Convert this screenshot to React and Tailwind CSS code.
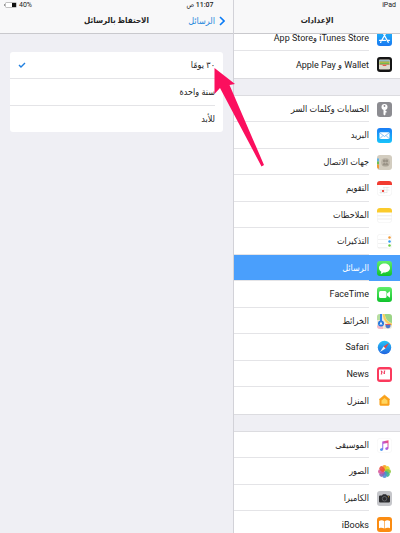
const AppIcon = ({ name }) => {
  switch (name) {
    case "appstore":
      return (
        <svg viewBox="0 0 30 30" className="size-[15px]">
          <defs>
            <linearGradient id="storeBlue" x1="0" y1="0" x2="0" y2="1">
              <stop offset="0" stopColor="#1fb6fb" />
              <stop offset="1" stopColor="#1a78f0" />
            </linearGradient>
          </defs>
          <rect width="30" height="30" rx="6" fill="url(#storeBlue)" />
          <g stroke="#fff" strokeWidth="2.6" strokeLinecap="round" fill="none">
            <path d="M16.500 6.500 L9.500 18.500 M13.500 6.500 L22.500 22.500 M5 18.700 H17 M21 18.700 H25 M8 21.500 L7.300 22.800" />
          </g>
        </svg>
      );
    case "wallet":
      return (
        <svg viewBox="0 0 30 30" className="size-[15px]">
          <rect width="30" height="30" rx="6" fill="#151515" />
          <rect x="4" y="5" width="22" height="20" rx="2" fill="#d9d5c8" />
          <rect x="5" y="7" width="20" height="3" fill="#57a3c8" />
          <rect x="5" y="9" width="20" height="3" fill="#e6b839" />
          <rect x="5" y="11" width="20" height="4" fill="#74b84f" />
          <rect x="5" y="15" width="20" height="3" fill="#e35b50" />
          <path d="M4 16 H10 C12 16 11 19 15 19 S18 16 20 16 H26 V24 H4 Z" fill="#dedacf" />
        </svg>
      );
    case "accounts":
      return (
        <svg viewBox="0 0 30 30" className="size-[15px]">
          <rect width="30" height="30" rx="6" fill="#8c8c91" />
          <circle cx="15" cy="10" r="6" fill="#fff" />
          <circle cx="15" cy="8" r="1.800" fill="#8c8c91" />
          <path d="M13 14 H17 V25 L15 27 L13 25 Z M17 18 h2 v3 h-2 Z" fill="#fff" />
        </svg>
      );
    case "mail":
      return (
        <svg viewBox="0 0 30 30" className="size-[15px]">
          <defs>
            <linearGradient id="mailBlue" x1="0" y1="0" x2="0" y2="1">
              <stop offset="0" stopColor="#1a7cf5" />
              <stop offset="1" stopColor="#18c4fb" />
            </linearGradient>
          </defs>
          <rect width="30" height="30" rx="6" fill="url(#mailBlue)" />
          <rect x="5" y="8.500" width="20" height="13.500" rx="2" fill="#fff" />
          <path d="M5.500 9.500 L15 17 L24.500 9.500 M5.500 21.500 L12 15 M24.500 21.500 L18 15" stroke="#3a9af0" strokeWidth="1.200" fill="none" />
        </svg>
      );
    case "contacts":
      return (
        <svg viewBox="0 0 30 30" className="size-[15px]">
          <rect width="30" height="30" rx="6" fill="#d3cdc0" />
          <path d="M0 7 H4 V13 H0 Z" fill="#5fb2e4" />
          <path d="M0 13 H4 V19 H0 Z" fill="#6bc152" />
          <path d="M0 19 H4 V28 L0 25 Z" fill="#f19a37" />
          <circle cx="17" cy="15" r="9" fill="#bdb6a9" />
          <circle cx="14.500" cy="12" r="2.800" fill="#9a9387" />
          <circle cx="19.500" cy="12" r="2.800" fill="#9a9387" />
          <path d="M11 21 C11 15 17 15 17 19 C17 15 23 15 23 21 Z" fill="#9a9387" />
        </svg>
      );
    case "calendar":
      return (
        <svg viewBox="0 0 30 30" className="size-[15px]">
          <rect x=".5" y=".5" width="29" height="29" rx="6" fill="#fff" stroke="#ececec" />
          <path d="M0 8 V6 A6 6 0 0 1 6 0 H24 A6 6 0 0 1 30 6 V8 Z" fill="#f23b30" />
          <path d="M12 13 H25 M5 18 H25 M5 23 H20 M8 17 V26 M14 12 V26 M20 12 V24" stroke="#d9d9d9" strokeWidth="1" />
          <rect x="10" y="18" width="4" height="4" fill="#ee4a41" />
        </svg>
      );
    case "notes":
      return (
        <svg viewBox="0 0 30 30" className="size-[15px]">
          <rect x=".5" y=".5" width="29" height="29" rx="6" fill="#fff" stroke="#ececec" />
          <path d="M0 9 V6 A6 6 0 0 1 6 0 H24 A6 6 0 0 1 30 6 V9 Z" fill="#fbcb2c" />
          <path d="M1 15.500 H29 M1 22 H29" stroke="#d8d8d8" strokeWidth="1" />
        </svg>
      );
    case "reminders":
      return (
        <svg viewBox="0 0 30 30" className="size-[15px]">
          <rect x=".5" y=".5" width="29" height="29" rx="6" fill="#fff" stroke="#ececec" />
          <path d="M2 11 H21 M2 19 H21 M2 27 H21" stroke="#e2e2e2" strokeWidth="1" />
          <circle cx="25" cy="7" r="2.500" fill="#f19a37" />
          <circle cx="25" cy="15" r="2.500" fill="#2f9bf2" />
          <circle cx="25" cy="23" r="2.500" fill="#6ccb3f" />
        </svg>
      );
    case "messages":
    case "facetime":
      return (
        <svg viewBox="0 0 30 30" className="size-[15px]">
          <defs>
            <linearGradient id={name + "Green"} x1="0" y1="0" x2="0" y2="1">
              <stop offset="0" stopColor="#62ee6a" />
              <stop offset="1" stopColor="#0fc22c" />
            </linearGradient>
          </defs>
          <rect width="30" height="30" rx="6" fill={"url(#" + name + "Green)"} />
          {name === "messages" ? (
            <path d="M15 5 C8.500 5 4 9 4 14 C4 17.300 6 20 8.700 21.600 C8.600 23.300 8 24.500 7 25.500 C9.500 25.300 11 24.300 12.300 22.800 C20 23.800 26 19.500 26 14 C26 9 21.500 5 15 5 Z" fill="#fff" />
          ) : (
            <>
              <rect x="4" y="8" width="15" height="14" rx="3" fill="#fff" />
              <path d="M20 13 L26 8.500 V21.500 L20 17 Z" fill="#fff" />
            </>
          )}
        </svg>
      );
    case "maps":
      return (
        <svg viewBox="0 0 30 30" className="size-[15px]">
          <defs>
            <clipPath id="mapTile">
              <rect width="30" height="30" rx="6" />
            </clipPath>
          </defs>
          <g clipPath="url(#mapTile)">
            <rect width="30" height="30" fill="#eee9db" />
            <path d="M15 0 H30 V18 C23 17 17 10 15 0 Z" fill="#9bd586" />
            <path d="M0 0 H6 V12 H0 Z" fill="#b7dfa0" />
            <path d="M0 23 H12 V30 H0 Z" fill="#f4b7c5" />
            <path d="M13 0 C15 13 21 19 30 21" stroke="#f7cf5c" strokeWidth="4" fill="none" />
            <path d="M8 0 V18" stroke="#3184ec" strokeWidth="4" />
            <circle cx="8" cy="19" r="6" fill="#2477df" />
            <path d="M8 15 L11 22 L8 20.500 L5 22 Z" fill="#fff" />
            <path d="M17 20 H27 V24 C27 27 24 28 22 29 C20 28 17 27 17 24 Z" fill="#4b78ca" />
            <path d="M17 20 H27 V22 H17 Z" fill="#e15364" />
          </g>
        </svg>
      );
    case "safari":
      return (
        <svg viewBox="0 0 30 30" className="size-[15px]">
          <defs>
            <linearGradient id="safariBlue" x1="0" y1="0" x2="0" y2="1">
              <stop offset="0" stopColor="#25c4f7" />
              <stop offset="1" stopColor="#2264e0" />
            </linearGradient>
          </defs>
          <circle cx="15" cy="15" r="13.500" fill="url(#safariBlue)" />
          <path d="M24 6 L17 17 L13 13 Z" fill="#f0443b" />
          <path d="M6 24 L17 17 L13 13 Z" fill="#f5f7fa" />
        </svg>
      );
    case "news":
      return (
        <svg viewBox="0 0 30 30" className="size-[15px]">
          <rect width="30" height="30" rx="6" fill="#fb3a5d" />
          <rect x="4" y="5" width="22" height="20" rx="1" fill="#fff" />
          <path d="M9 14 V8 L15 14 V8 M7.500 8 H9.500 M13.500 8 H16.500 M7.500 14 H10.500" stroke="#ef3256" strokeWidth="1.700" fill="none" />
        </svg>
      );
    case "home":
      return (
        <svg viewBox="0 0 30 30" className="size-[15px]">
          <path d="M15 4 L26 13 H24.500 V23 Q24.500 25 22.500 25 H7.500 Q5.500 25 5.500 23 V13 H4 Z" fill="#f9a11b" stroke="#f9a11b" strokeLinejoin="round" />
          <path d="M15 10 L21 15 V21.500 H9 V15 Z" fill="#ffd660" />
        </svg>
      );
    case "music":
      return (
        <svg viewBox="0 0 30 30" className="size-[15px]">
          <defs>
            <linearGradient id="noteTint" x1="1" y1="0" x2="0" y2="1">
              <stop offset="0" stopColor="#fb4767" />
              <stop offset=".5" stopColor="#b05be4" />
              <stop offset="1" stopColor="#36a8f5" />
            </linearGradient>
          </defs>
          <rect x=".5" y=".5" width="29" height="29" rx="6" fill="#fff" stroke="#f0f0f0" />
          <path d="M10.500 7 L23 4.500 V20 C23 25 16 25 16.500 21 C17 18.500 19 18.500 21 18 V10 L12.500 11.700 V22 C12.500 27 5.500 27 6 23 C6.500 20.500 8.500 20.500 10.500 20 Z" fill="url(#noteTint)" />
        </svg>
      );
    case "photos":
      return (
        <svg viewBox="0 0 30 30" className="size-[15px]">
          {[
            "#f7a022",
            "#e5d428",
            "#8cc63f",
            "#3fb38d",
            "#4d8fd6",
            "#8a65b8",
            "#d8599b",
            "#f0533c",
          ].map((color, i) => (
            <rect
              key={color}
              x="10.500"
              y="2"
              width="9"
              height="12.500"
              rx="4.500"
              fill={color}
              fillOpacity=".9"
              transform={`rotate(${i * 45} 15 15)`}
            />
          ))}
        </svg>
      );
    case "camera":
      return (
        <svg viewBox="0 0 30 30" className="size-[15px]">
          <rect width="30" height="30" rx="6" fill="#c5c6ca" />
          <path d="M4 11 Q4 9 6 9 H10 L12 6.500 H18 L20 9 H24 Q26 9 26 11 V21 Q26 23 24 23 H6 Q4 23 4 21 Z" fill="#2c2c2f" />
          <circle cx="15" cy="15.500" r="4.500" fill="#2c2c2f" stroke="#808186" strokeWidth="1.200" />
          <circle cx="23" cy="11.500" r="1" fill="#f3b72f" />
        </svg>
      );
    case "ibooks":
      return (
        <svg viewBox="0 0 30 30" className="size-[15px]">
          <rect width="30" height="30" rx="6" fill="#fb8c12" />
          <path d="M4 8 C8 6 12 6.500 14.400 8.500 V23 C11.500 21.300 8 21.300 4 22.500 Z M26 8 C22 6 18 6.500 15.600 8.500 V23 C18.500 21.300 22 21.300 26 22.500 Z" fill="#fff" />
        </svg>
      );
    default:
      return null;
  }
};

const groups = [
  [
    { icon: "appstore", label: "iTunes Store وApp Store" },
    { icon: "wallet", label: "Wallet و Apple Pay" },
  ],
  [
    { icon: "accounts", label: "الحسابات وكلمات السر" },
    { icon: "mail", label: "البريد" },
    { icon: "contacts", label: "جهات الاتصال" },
    { icon: "calendar", label: "التقويم" },
    { icon: "notes", label: "الملاحظات" },
    { icon: "reminders", label: "التذكيرات" },
    { icon: "messages", label: "الرسائل", active: true },
    { icon: "facetime", label: "FaceTime" },
    { icon: "maps", label: "الخرائط" },
    { icon: "safari", label: "Safari" },
    { icon: "news", label: "News" },
    { icon: "home", label: "المنزل" },
  ],
  [
    { icon: "music", label: "الموسيقى" },
    { icon: "photos", label: "الصور" },
    { icon: "camera", label: "الكاميرا" },
    { icon: "ibooks", label: "iBooks" },
  ],
];

const durations = ["٣٠ يومًا", "سنة واحدة", "للأبد"];

const StatusBar = () => (
  <div className="absolute inset-x-0 top-0 z-20 grid grid-cols-3 items-center px-1 text-[7px] leading-[10px] text-[#222]">
    <span>iPad</span>
    <span className="text-center font-medium">11:07 ص</span>
    <span className="flex items-center justify-end gap-0.5">
      <span>40%</span>
      <svg viewBox="0 0 13 6" className="h-[6px] w-[13px]">
        <rect x="1.500" y=".5" width="11" height="5" rx="1" fill="#fff" stroke="#999" strokeWidth=".6" />
        <rect x="8" y="1" width="4" height="4" fill="#111" />
        <rect x="0" y="2" width="1" height="2" fill="#999" />
      </svg>
    </span>
  </div>
);

const Sidebar = () => (
  <aside className="flex w-[166px] shrink-0 flex-col">
    <header className="z-10 flex h-[34px] shrink-0 items-center justify-center border-b border-[#c9c9cd] bg-[#f8f8f9] pt-2">
      <h1 className="text-[8px] font-bold">الإعدادات</h1>
    </header>
    <nav className="-mt-[9px] flex min-h-0 flex-1 flex-col gap-[18px] overflow-y-auto [scrollbar-width:none]">
      {groups.map((group, i) => (
        <ul key={i} className="shrink-0 bg-white outline outline-[#dcdce0]">
          {group.map((item) => (
            <li key={item.icon} className="group odd:h-[26px] even:h-[27px]">
              <a
                href={"#" + item.icon}
                className={
                  item.active
                    ? "flex h-full items-center gap-2 bg-[#4a9ffc] ps-2 text-white"
                    : "flex h-full items-center gap-2 ps-2"
                }
              >
                <AppIcon name={item.icon} />
                <span className="flex h-full flex-1 items-center border-b border-[#e4e4e7] group-last:border-0">
                  {item.label}
                </span>
              </a>
            </li>
          ))}
        </ul>
      ))}
    </nav>
  </aside>
);

const KeepMessages = () => (
  <main className="min-w-0 flex-1 border-r border-[#d2d2d8]">
    <header className="grid h-[34px] grid-cols-[1fr_auto_1fr] items-center border-b border-[#c9c9cd] bg-[#f8f8f9] px-2 pt-2">
      <button type="button" className="flex items-center gap-1 text-[#2787dc]">
        <svg viewBox="0 0 6 10" className="h-[10px] w-[6px]">
          <path d="M1 1 L5 5 L1 9" fill="none" stroke="#0a7bf5" strokeWidth="1.600" />
        </svg>
        الرسائل
      </button>
      <h2 className="text-[8px] font-bold">الاحتفاظ بالرسائل</h2>
    </header>
    <fieldset className="mx-[10px] mt-[18px] rounded-[3px] bg-white ps-2">
      {durations.map((label, i) => (
        <label
          key={label}
          className="flex h-[27px] items-center justify-between border-b border-[#e4e4e7] pe-2 last:h-[26px] last:border-0"
        >
          {label}
          <input type="radio" name="duration" defaultChecked={i === 0} className="peer sr-only" />
          <svg viewBox="0 0 8 6" className="hidden h-[6px] w-2 peer-checked:block">
            <path d="M1 3 L3 5 L7 1" fill="none" stroke="#1f7fe0" strokeWidth="1.400" />
          </svg>
        </label>
      ))}
    </fieldset>
  </main>
);

const App = () => {
  return (
    <div
      dir="rtl"
      className="relative flex h-screen overflow-hidden bg-[#efeff4] font-['Roboto','DejaVu_Sans_Condensed','DejaVu_Sans',sans-serif] text-[9px] leading-3 text-[#222]"
    >
      <StatusBar />
      <Sidebar />
      <KeepMessages />

      {/* Pointer over the first option */}
      <svg viewBox="0 0 50 100" className="pointer-events-none absolute top-[68px] right-[136px] z-30 h-[100px] w-[50px]">
        <path d="M0.500 0 L21 16 L15.500 17 L50 97 L47.500 98.500 L6 20 L0.500 26 Z" fill="#fb0f5e" />
      </svg>
    </div>
  );
};

export default App;
